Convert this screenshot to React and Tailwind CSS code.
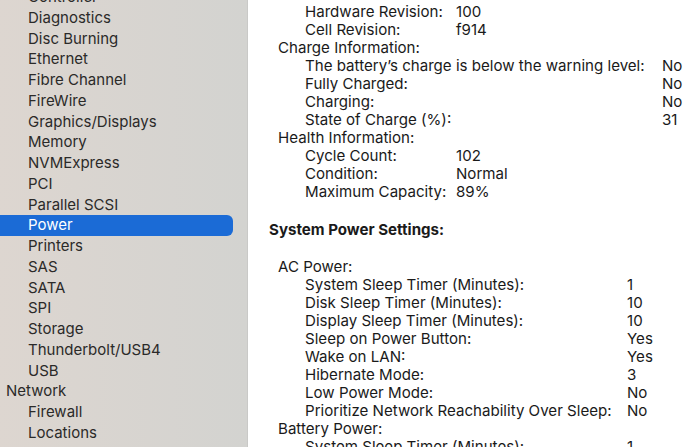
import React from "react";

const sidebar = [
  { t: "Controller", l: 1 },
  { t: "Diagnostics", l: 1 },
  { t: "Disc Burning", l: 1 },
  { t: "Ethernet", l: 1 },
  { t: "Fibre Channel", l: 1 },
  { t: "FireWire", l: 1 },
  { t: "Graphics/Displays", l: 1 },
  { t: "Memory", l: 1 },
  { t: "NVMExpress", l: 1 },
  { t: "PCI", l: 1 },
  { t: "Parallel SCSI", l: 1 },
  { t: "Power", l: 1, sel: true },
  { t: "Printers", l: 1 },
  { t: "SAS", l: 1 },
  { t: "SATA", l: 1 },
  { t: "SPI", l: 1 },
  { t: "Storage", l: 1 },
  { t: "Thunderbolt/USB4", l: 1 },
  { t: "USB", l: 1 },
  { t: "Network", l: 0 },
  { t: "Firewall", l: 1 },
  { t: "Locations", l: 1 },
];

function Row({ label, value, w, indent = "pl-[36px]" }) {
  return (
    <div className={`flex h-[18px] items-center whitespace-nowrap ${indent}`}>
      <span className={w}>{label}</span>
      {value !== undefined && <span>{value}</span>}
    </div>
  );
}

function Heading({ children }) {
  return (
    <div className="flex h-[18px] items-center whitespace-nowrap pl-[9px]">{children}</div>
  );
}

export default function App() {
  return (
    <div
      className="flex h-[447px] w-[700px] overflow-hidden bg-white text-[#1d1d1f]"
      style={{ fontFamily: "Inter, 'Noto Sans', sans-serif" }}
    >
      <div className="flex w-[248px] shrink-0 flex-col overflow-hidden border-r border-[#c9c9c7] bg-gradient-to-r from-[#ddd6d0] to-[#d3d3d0]">
        <div className="mt-[-13px] flex flex-col">
          {sidebar.map((it) => (
            <div
              key={it.t}
              className={`flex h-[20.75px] items-center text-[15px] ${
                it.sel
                  ? "mr-[14px] rounded-r-[6px] bg-[#1b6bd6] text-white"
                  : "text-[#2b2a29]"
              } ${it.l ? "pl-[28px]" : "pl-[6px]"}`}
            >
              {it.t}
            </div>
          ))}
        </div>
      </div>
      <div className="flex flex-1 flex-col overflow-hidden pl-[21px] pt-[3px] text-[15.1px] text-[#1a1a1a]">
        <Row label="Hardware Revision:" value="100" w="w-[151px]" />
        <Row label="Cell Revision:" value="f914" w="w-[151px]" />
        <Heading>Charge Information:</Heading>
        <Row label="The battery’s charge is below the warning level:" value="No" w="w-[357px]" />
        <Row label="Fully Charged:" value="No" w="w-[357px]" />
        <Row label="Charging:" value="No" w="w-[357px]" />
        <Row label="State of Charge (%):" value="31" w="w-[357px]" />
        <Heading>Health Information:</Heading>
        <Row label="Cycle Count:" value="102" w="w-[151px]" />
        <Row label="Condition:" value="Normal" w="w-[151px]" />
        <Row label="Maximum Capacity:" value="89%" w="w-[151px]" />
        <div className="mt-[20px] flex h-[18px] items-center whitespace-nowrap font-bold">
          System Power Settings:
        </div>
        <div className="mt-[19px]">
          <Heading>AC Power:</Heading>
        </div>
        <Row label="System Sleep Timer (Minutes):" value="1" w="w-[322px]" />
        <Row label="Disk Sleep Timer (Minutes):" value="10" w="w-[322px]" />
        <Row label="Display Sleep Timer (Minutes):" value="10" w="w-[322px]" />
        <Row label="Sleep on Power Button:" value="Yes" w="w-[322px]" />
        <Row label="Wake on LAN:" value="Yes" w="w-[322px]" />
        <Row label="Hibernate Mode:" value="3" w="w-[322px]" />
        <Row label="Low Power Mode:" value="No" w="w-[322px]" />
        <Row label="Prioritize Network Reachability Over Sleep:" value="No" w="w-[322px]" />
        <Heading>Battery Power:</Heading>
        <Row label="System Sleep Timer (Minutes):" value="1" w="w-[322px]" />
      </div>
    </div>
  );
}
